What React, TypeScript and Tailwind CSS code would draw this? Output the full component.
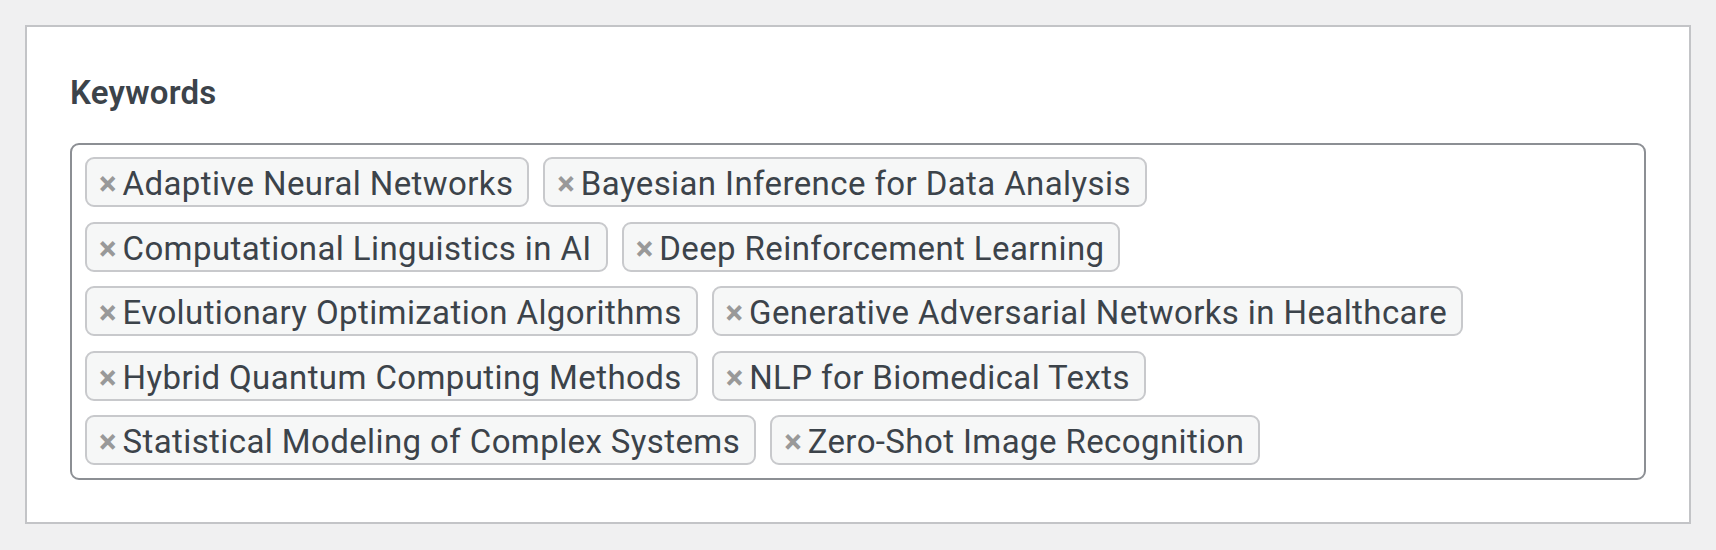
import React from "react";

const keywords = [
  "Adaptive Neural Networks",
  "Bayesian Inference for Data Analysis",
  "Computational Linguistics in AI",
  "Deep Reinforcement Learning",
  "Evolutionary Optimization Algorithms",
  "Generative Adversarial Networks in Healthcare",
  "Hybrid Quantum Computing Methods",
  "NLP for Biomedical Texts",
  "Statistical Modeling of Complex Systems",
  "Zero-Shot Image Recognition",
];

function Tag(props: { label: string }) {
  return (
    <li className="flex h-[50px] items-start rounded-[9px] border-2 border-[#c8c9cc] bg-[#f6f7f7] pl-[12px] pr-[14px] text-[33px] leading-[50px] tracking-[0.4px] text-[#3c434a]">
      <button
        type="button"
        className="mr-[6px] cursor-pointer font-bold leading-[50px] tracking-normal text-[#999999]"
        aria-label={"Remove " + props.label}
      >
        ×
      </button>
      <span>{props.label}</span>
    </li>
  );
}

export default function App() {
  return (
    <div
      className="min-h-[550px] bg-[#f0f0f1] p-[25px]"
      style={{ fontFamily: "Roboto, 'Noto Sans', sans-serif" }}
    >
      <div className="border-2 border-[#c3c4c7] bg-white px-[43px] pb-[42px] pt-[46px]">
        {/* Label */}
        <div className="mb-[30px] text-[33px] font-semibold leading-[40px] tracking-[0.25px] text-[#3c434a]">
          Keywords
        </div>

        {/* Tag box */}
        <ul className="flex flex-wrap gap-x-[14px] gap-y-[14.5px] rounded-[9px] border-2 border-[#8c8f94] bg-white px-[13px] pb-[13px] pt-[12px]">
          {keywords.map((k) => (
            <Tag key={k} label={k} />
          ))}
        </ul>
      </div>
    </div>
  );
}
